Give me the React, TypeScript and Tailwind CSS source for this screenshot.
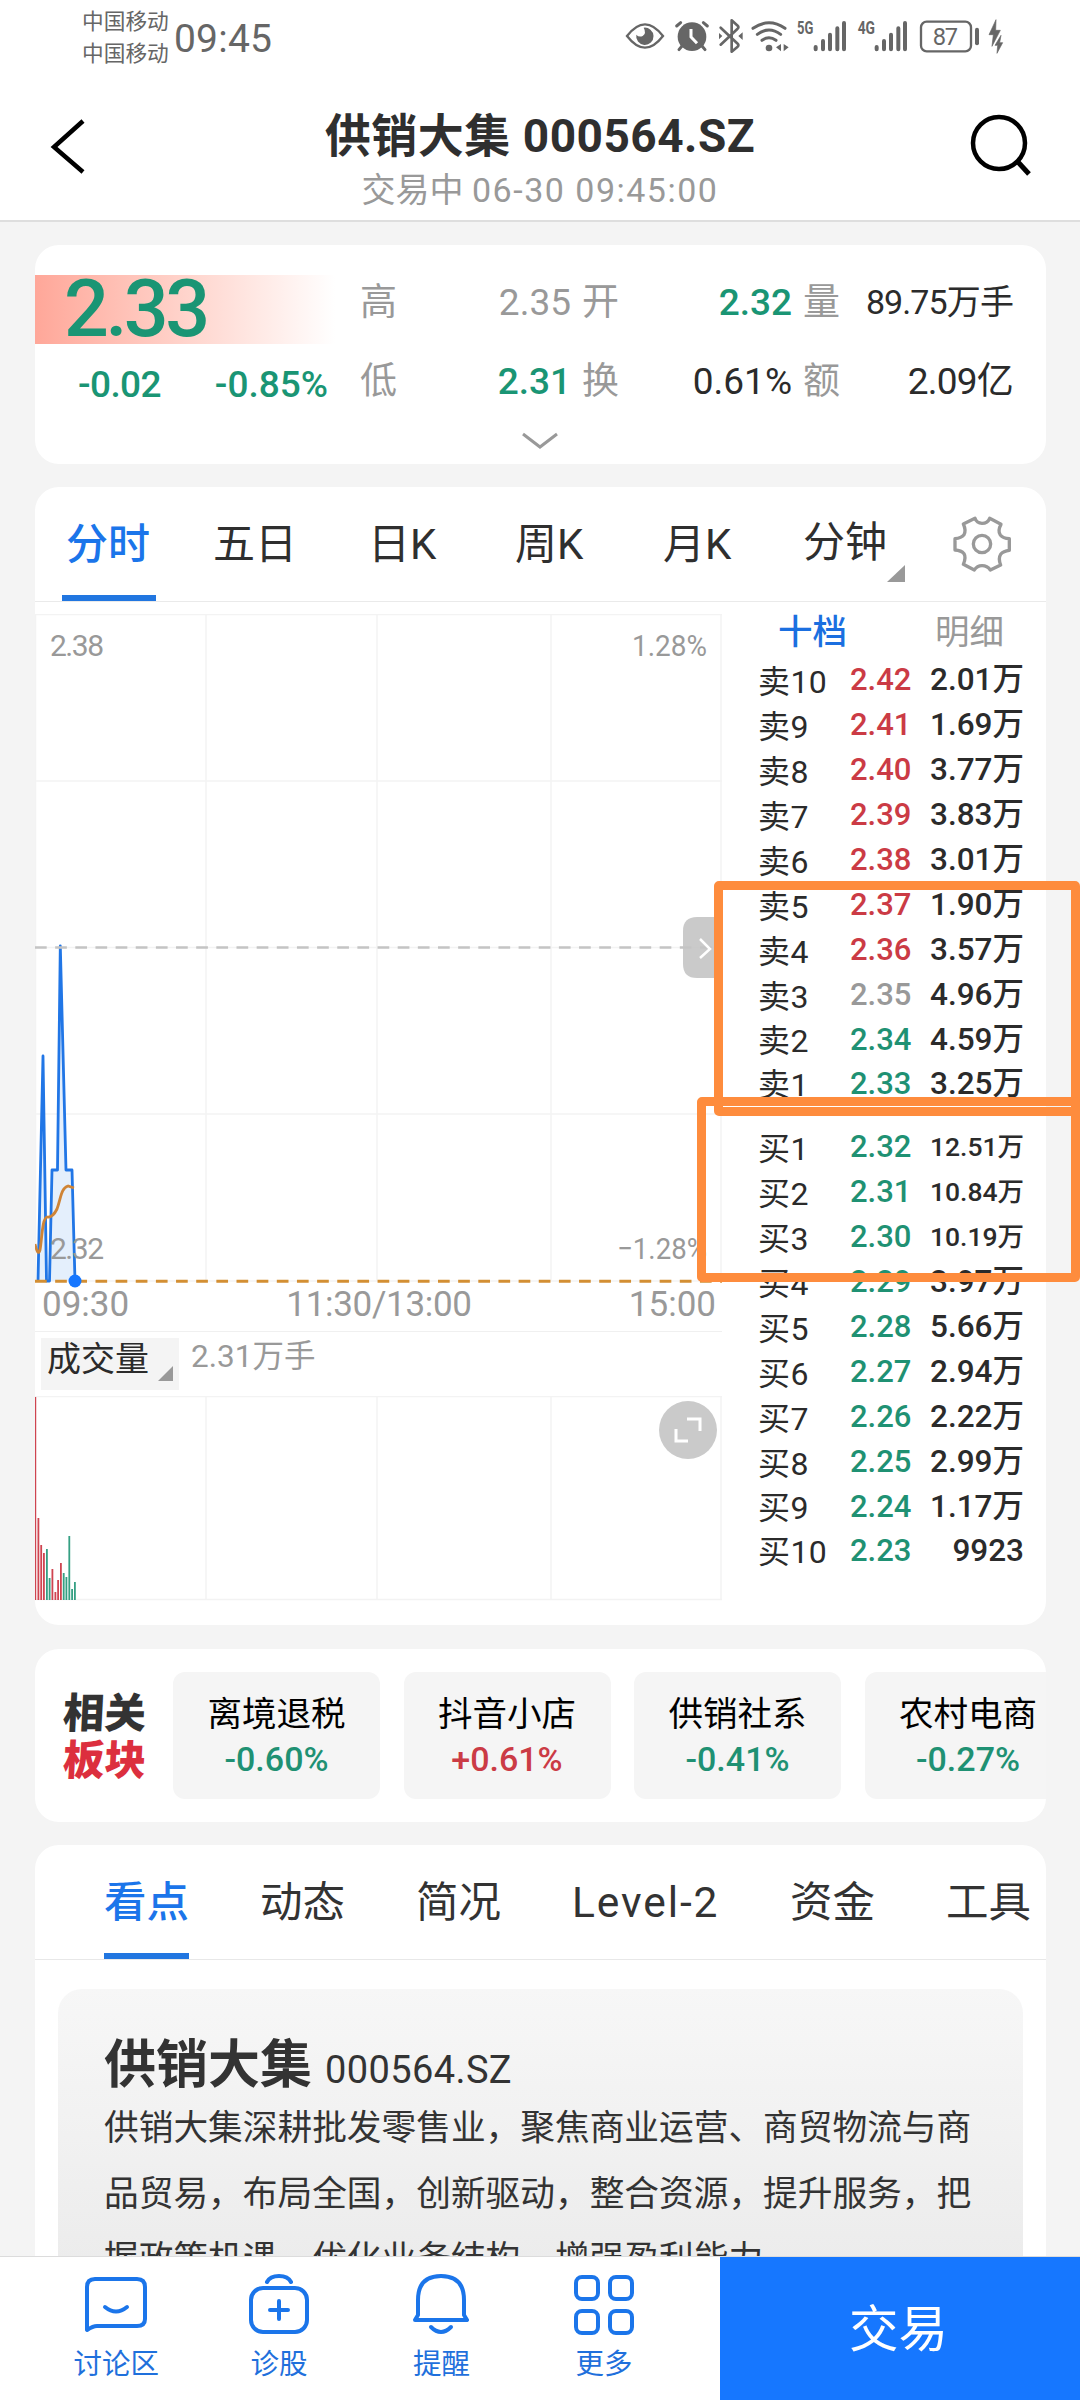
import clsx from 'clsx';

const quotes = [
  { label: '高', value: '2.35', tone: 'text-[#999]' },
  { label: '开', value: '2.32', tone: 'text-[#1a9574] font-medium' },
  { label: '量', value: '89.75万手', tone: 'text-[#2b2b2b] text-[34px] tracking-[-0.9px]' },
  { label: '低', value: '2.31', tone: 'text-[#1a9574] font-medium' },
  { label: '换', value: '0.61%', tone: 'text-[#2b2b2b]' },
  { label: '额', value: '2.09亿', tone: 'text-[#2b2b2b] tracking-[-0.8px]' },
];

const periods = ['五日', '日K', '周K', '月K'];

const asks = [
  ['卖10', '2.42', '2.01万'],
  ['卖9', '2.41', '1.69万'],
  ['卖8', '2.40', '3.77万'],
  ['卖7', '2.39', '3.83万'],
  ['卖6', '2.38', '3.01万'],
  ['卖5', '2.37', '1.90万'],
  ['卖4', '2.36', '3.57万'],
  ['卖3', '2.35', '4.96万'],
  ['卖2', '2.34', '4.59万'],
  ['卖1', '2.33', '3.25万'],
];

const bids = [
  ['买1', '2.32', '12.51万'],
  ['买2', '2.31', '10.84万'],
  ['买3', '2.30', '10.19万'],
  ['买4', '2.29', '3.97万'],
  ['买5', '2.28', '5.66万'],
  ['买6', '2.27', '2.94万'],
  ['买7', '2.26', '2.22万'],
  ['买8', '2.25', '2.99万'],
  ['买9', '2.24', '1.17万'],
  ['买10', '2.23', '9923'],
];

const sectors = [
  { name: '离境退税', change: '-0.60%' },
  { name: '抖音小店', change: '+0.61%' },
  { name: '供销社系', change: '-0.41%' },
  { name: '农村电商', change: '-0.27%' },
];

const RED = '#cf4450';
const GREEN = '#35a083';

// [x, height, colour]
const volumes: [number, number, string][] = [
  [-0.6, 203, RED],
  [2.5, 82, RED],
  [5.3, 55, RED],
  [8, 47, RED],
  [11, 51, GREEN],
  [13.7, 22, GREEN],
  [16.5, 31, RED],
  [19.5, 8, RED],
  [22.2, 20, RED],
  [25, 37, RED],
  [27.8, 27, GREEN],
  [30.5, 23, GREEN],
  [33.4, 64, GREEN],
  [36.2, 11, GREEN],
  [39, 18, GREEN],
];

const gridX = [0.5, 171, 342, 516, 686];

function StatusIcons() {
  return (
    <svg width="400" height="40" viewBox="60 45 1200 120" fill="none" stroke="#666" strokeWidth="7">
      <path d="M81 108 Q108 73 135 73 Q162 73 189 108 Q162 143 135 143 Q108 143 81 108Z" />
      <path d="M131 83 A26 26 0 1 1 109 104 Q117 113 128 108 Q140 99 131 83Z" fill="#666" stroke="none" />
      <circle cx="276" cy="110" r="43" fill="#666" stroke="none" />
      <path d="M230 78 L242 68 M322 78 L310 68 M246 138 L237 149 M306 138 L315 149" strokeWidth="9" strokeLinecap="round" />
      <path d="M273 87 V111 L291 130" stroke="#fff" strokeWidth="9" />
      <path d="M362 83 L413 131 Q418 136 412 141 L395 155 V61 L413 77 Q418 82 412 87 L362 134" strokeWidth="8" strokeLinejoin="round" strokeLinecap="round" />
      <path d="M357 99 L367 108 L357 118Z M428 97 L415 108 L428 120Z" fill="#666" stroke="none" />
      <path d="M459 85 Q507 52 555 85 M472 103 Q507 77 542 103 M486 121 Q507 106 528 121" strokeWidth="9" strokeLinecap="round" />
      <circle cx="507" cy="144" r="10" fill="#666" stroke="none" />
      <path d="M528 142 L543 132 V154Z M566 142 L551 132 V154Z" fill="#666" stroke="none" />
      <g strokeWidth="12" strokeLinecap="round">
        <path d="M647 141 V148 M669 123 V148 M690 104 V148 M712 85 V148 M732 69 V148" />
        <path d="M830 141 V148 M852 123 V148 M873 104 V148 M895 85 V148 M915 69 V148" />
      </g>
      <rect x="963" y="65" width="150" height="89" rx="17" />
      <path d="M1131 89 V130" strokeWidth="12" strokeLinecap="round" />
      <path d="M1188 59 L1167 104 H1180 L1176 139 L1201 91 H1187Z M1203 106 L1185 136 H1193 L1191 160 L1208 128 H1199Z" fill="#666" stroke="#666" strokeWidth="2" />
      <g fill="#666" stroke="none" className="font-['Roboto',sans-serif]">
        <text x="591" y="102" fontSize="54" fontWeight="700" textLength="49" lengthAdjust="spacingAndGlyphs">5G</text>
        <text x="773" y="102" fontSize="54" fontWeight="700" textLength="52" lengthAdjust="spacingAndGlyphs">4G</text>
        <text x="998" y="136" fontSize="71" textLength="76">87</text>
      </g>
    </svg>
  );
}

function Header() {
  return (
    <header className="h-[222px] shrink-0 bg-white border-b-2 border-[#dedede]">
      <div className="h-[72px] flex items-start pl-[82px] text-[#666]">
        <div className="pt-[6px] text-[21.7px] leading-[32px] w-[92px] whitespace-nowrap">
          <div>中国移动</div>
          <div>中国移动</div>
        </div>
        <div className="pt-[15px] text-[39px] leading-[48px] w-[446px] tracking-[0.2px]">09:45</div>
        <div className="pt-[15px]">
          <StatusIcons />
        </div>
      </div>
      <div className="flex justify-between pt-[37px]">
        <svg width="140" height="76" fill="none" stroke="#000" strokeWidth="4.5">
          <path d="M83 12 L54 38 L83 63" />
        </svg>
        <div className="text-center">
          <h1 className="text-[46px] leading-[54px] font-bold text-[#2f2f2f] tracking-[0.5px]">供销大集 000564.SZ</h1>
          <p className="text-[34px] leading-[54px] text-[#999]">
            交易中 <span className="tracking-[1.5px]">06-30 09:45:00</span>
          </p>
        </div>
        <svg width="140" height="76" fill="none" stroke="#000" strokeWidth="4.5">
          <circle cx="59" cy="34" r="26" />
          <path d="M78 53 L89 65" strokeWidth="5" />
        </svg>
      </div>
    </header>
  );
}

function QuoteCard() {
  return (
    <section className="h-[219px] shrink-0 bg-white rounded-3xl overflow-hidden pt-4">
      <div className="flex">
        <div className="w-[325px] pt-[14px] text-[#1a9574] font-medium">
          <div className="h-[69px] w-[300px] pl-[29px] flex items-center bg-linear-to-r from-[#ffa799] to-white text-[79px] leading-none tracking-[-3.5px]">
            2.33
          </div>
          <div className="h-[82px] flex items-center justify-between pl-[43px] pr-[32px] text-[37px]">
            <span className="tracking-[-0.6px]">-0.02</span>
            <span>-0.85%</span>
          </div>
        </div>
        <div className="grid grid-cols-[211px_210px_210px] gap-x-[11px] pt-[2px] h-[160px]">
          {quotes.map((q) => (
            <div key={q.label} className="h-[79px] flex items-center justify-between text-[37px]">
              <span className="text-[#999]">{q.label}</span>
              <span className={q.tone}>{q.value}</span>
            </div>
          ))}
        </div>
      </div>
      <div className="h-[44px] -mt-[7px] pr-[2px] flex items-center justify-center">
        <svg width="36" height="18" fill="none" stroke="#999" strokeWidth="3">
          <path d="M1 2 L18 15 L35 2" />
        </svg>
      </div>
    </section>
  );
}

function PeriodTabs() {
  return (
    <div className="h-[115px] flex text-[42px] leading-[116px] text-[#2f2f2f] border-b border-[#eaeaea]">
      <div className="w-[94px] ml-[27px] pr-[2px] text-center text-[#1b75ea] font-medium border-b-[6px] border-[#2176e0]">分时</div>
      <div className="flex flex-1 pl-[57px]">
        {periods.map((p) => (
          <div key={p} className="w-[147px] text-left even:pl-[8px] nth-[3]:pl-[8px] nth-[4]:pl-[9px]">
            {p}
          </div>
        ))}
        <div className="flex items-end pl-[2px]">
          <span>分钟</span>
          <svg width="18" height="17" className="mb-[19px]">
            <path d="M18 0 V17 H0Z" fill="#999" />
          </svg>
        </div>
      </div>
      <div className="w-[94px] flex items-center">
        <svg width="60" height="60" viewBox="36 41 180 180" fill="none" stroke="#999" strokeWidth="10">
          <path
            d="M105 54 Q110 69 126 69 Q143 69 149 54 L183 72 Q172 92 181 104 Q189 114 208 115 V150 Q190 152 182 162 Q174 174 182 194 L151 209 Q142 196 126 196 Q111 196 103 209 L70 192 Q79 172 72 160 Q64 150 45 149 V115 Q64 113 72 103 Q79 90 70 71Z"
            strokeLinejoin="round"
          />
          <circle cx="126" cy="131" r="26" />
        </svg>
      </div>
    </div>
  );
}

function PriceChart() {
  return (
    <svg width="687" height="676" className="block">
      <g stroke="#f3f3f3" strokeWidth="1.5">
        {gridX.map((x) => (
          <path key={x} d={`M${x} 0V667`} />
        ))}
        <path d="M0 .5H687M0 167H687M0 333.5H687M0 500H687M0 667H687" />
      </g>
      <path d="M3 667 L8 442 L12.5 667 L14.5 667 L17 556 H22.5 L25.5 332 L31 556 H37 L40 667Z" fill="#e4effc" />
      <path
        d="M3 667 L8 442 L11.5 667 H14.5 L17 556 H22.5 L25.3 332 L31 556 H37 L40 667"
        fill="none"
        stroke="#2176e6"
        strokeWidth="2.8"
        strokeLinejoin="round"
      />
      <path d="M0 630 Q3 643 5 636 C7 626 7 604 12 603 C17 604 20 599 22 595 C26 584 26 574 33 572 L39 574" fill="none" stroke="#cf8436" strokeWidth="2.8" />
      <path d="M0 333.5H687" stroke="#c4c4c4" strokeWidth="2.5" strokeDasharray="11.7 8.45" />
      <path d="M0 667.3H687" stroke="#d38f33" strokeWidth="3" strokeDasharray="11.7 8.45" />
      <circle cx="40" cy="667" r="6.5" fill="#1677ff" />
      <g fill="#999" fontSize="30" className="font-['Roboto',sans-serif]">
        <text x="15" y="42" textLength="54">2.38</text>
        <text x="597" y="42" textLength="75" lengthAdjust="spacingAndGlyphs">1.28%</text>
        <text x="15" y="645" textLength="54">2.32</text>
        <text x="582" y="645" textLength="90" lengthAdjust="spacingAndGlyphs">−1.28%</text>
      </g>
      <path d="M687 303H662Q648 303 648 317V350Q648 364 662 364H687Z" fill="#c4c4c4" fillOpacity=".9" />
      <path d="M665 325L675 335L665 344" fill="none" stroke="#fff" strokeWidth="2.5" />
    </svg>
  );
}

function VolumeChart() {
  return (
    <svg width="687" height="205" className="block">
      <g stroke="#f3f3f3" strokeWidth="1.5">
        {gridX.map((x) => (
          <path key={x} d={`M${x} 0V204`} />
        ))}
        <path d="M0 .5H687M0 203.5H687" />
      </g>
      {volumes.map(([x, h, color]) => (
        <rect key={x} x={x} y={204 - h} width="1.8" height={h} fill={color} />
      ))}
      <circle cx="653" cy="34" r="29" fill="#cacaca" />
      <path d="M652 23H665V35M641 33V45H653" fill="none" stroke="#fff" strokeWidth="3" />
    </svg>
  );
}

function OrderRow({ row }: { row: string[] }) {
  const [label, price, volume] = row;
  const p = Number(price);
  return (
    <div className="h-[45px] nth-[n+9]:h-[44px] flex items-center text-[31px] leading-[45px] whitespace-nowrap text-[#2b2b2b]">
      <span className="w-[91px] pt-[5px] -ml-[2px] mr-px text-[32px] tracking-[0.4px]">{label}</span>
      <span
        className={clsx(
          'font-medium',
          p > 2.35 && 'text-[#cb3b45]',
          p === 2.35 && 'text-[#999]',
          p < 2.35 && 'text-[#1f9173]',
        )}
      >
        {price}
      </span>
      <span className={clsx('ml-auto font-medium', volume.length > 5 ? 'text-[26.5px]' : 'text-[31.5px]')}>{volume}</span>
    </div>
  );
}

function OrderBook() {
  return (
    <div className="flex-1 pl-[38px] pr-[22px] pt-[4px]">
      <div className="flex text-[34.5px] leading-[52px] pl-[18px]">
        <span className="w-[157px] text-[#1b6fe0] font-medium">十档</span>
        <span className="text-[#999]">明细</span>
      </div>
      <div className="-mt-px">
        {asks.map((r) => (
          <OrderRow key={r[0]} row={r} />
        ))}
      </div>
      <div className="mt-[19px]">
        {bids.map((r) => (
          <OrderRow key={r[0]} row={r} />
        ))}
      </div>
    </div>
  );
}

function ChartCard() {
  return (
    <section className="h-[1138px] shrink-0 bg-white rounded-3xl overflow-hidden">
      <PeriodTabs />
      <div className="flex">
        <div className="w-[687px] pt-[12px]">
          <PriceChart />
          <div className="h-[42px] pl-[7px] pr-[6px] flex justify-between text-[35px] leading-[30px] text-[#999] border-b border-[#f0f0f0]">
            <span>09:30</span>
            <span className="tracking-[-0.3px]">11:30/13:00</span>
            <span>15:00</span>
          </div>
          <div className="h-[64px] flex pl-[6px] pt-[6px] text-[#999]">
            <div className="w-[138px] h-[52px] pl-[6px] flex bg-[#f4f4f4] text-[34px] leading-[42px] text-[#2b2b2b]">
              成交量
              <svg width="16" height="16" className="mt-[28px] ml-[9px]">
                <path d="M15 0 V15 H0Z" fill="#999" />
              </svg>
            </div>
            <span className="ml-[12px] text-[31.5px] leading-[38px]">2.31万手</span>
          </div>
          <VolumeChart />
        </div>
        <OrderBook />
      </div>
    </section>
  );
}

function SectorCard() {
  return (
    <section className="h-[173px] mt-px shrink-0 bg-white rounded-3xl overflow-hidden flex items-center">
      <div className="w-[138px] shrink-0 pl-[28px] pt-[2px] text-[41.5px] leading-[47px] font-black">
        <div className="text-[#333] -skew-x-3 w-[84px]">相关</div>
        <div className="text-[#dc2f3e] -skew-x-3 w-[84px]">板块</div>
      </div>
      <div className="flex gap-[23.5px]">
        {sectors.map((s) => (
          <div key={s.name} className="w-[207px] h-[127px] shrink-0 pt-[20px] rounded-xl bg-[#f5f5f5] text-center text-[34.5px] leading-[45px]">
            <div className="text-black">{s.name}</div>
            <div className={clsx('font-medium text-[34px]', s.change.startsWith('+') ? 'text-[#cb3b45]' : 'text-[#1f9173]')}>{s.change}</div>
          </div>
        ))}
      </div>
    </section>
  );
}

function InfoCard() {
  return (
    <section className="shrink-0 bg-white rounded-t-3xl overflow-hidden">
      <nav className="h-[115px] flex gap-[71px] pl-[69px] whitespace-nowrap text-[42.5px] leading-[116px] text-[#333] border-b border-[#e8e8e8]">
        <span className="text-[#1b75ea] font-medium border-b-[6px] border-[#2176e0]">看点</span>
        <span>动态</span>
        <span>简况</span>
        <span className="w-[147px] tracking-[1.9px]">Level-2</span>
        <span>资金</span>
        <span>工具</span>
      </nav>
      <div className="mt-[29px] mx-[23px] h-[420px] rounded-t-3xl px-[46px] pt-[39px] bg-linear-to-b from-[#f7f7f7] to-[#e6e6e6] text-[#333]">
        <h2 className="text-[52px] leading-[76px] font-bold">
          供销大集 <span className="text-[38px] font-normal tracking-[0.4px]">000564.SZ</span>
        </h2>
        <p className="-mt-[12px] w-[880px] text-[34.7px] leading-[65.5px]">
          供销大集深耕批发零售业，聚焦商业运营、商贸物流与商
          <br />
          品贸易，布局全国，创新驱动，整合资源，提升服务，把
          <br />
          握政策机遇，优化业务结构，增强盈利能力
        </p>
      </div>
    </section>
  );
}

const actions = [
  {
    label: '讨论区',
    icon: (
      <>
        <path d="M3 57 V14 Q3 6 11 6 H53 Q61 6 61 14 V46 Q61 53 53 53 H13 Q9 53 3 57Z" />
        <path d="M21 34 Q32 43 43 34" />
      </>
    ),
  },
  {
    label: '诊股',
    icon: (
      <>
        <rect x="4" y="15" width="56" height="44" rx="12" />
        <path d="M20 9 Q23 3 32 3 Q41 3 44 9 M32 28 V46 M23 37 H41" />
      </>
    ),
  },
  {
    label: '提醒',
    icon: (
      <>
        <path d="M9 42 V27 Q9 3 32 3 Q55 3 55 27 V42 L58 47 H6Z" />
        <path d="M22 54 Q32 64 42 54" />
      </>
    ),
  },
  {
    label: '更多',
    icon: (
      <>
        <rect x="4" y="4" width="22" height="22" rx="6" />
        <rect x="38" y="4" width="22" height="22" rx="6" />
        <rect x="4" y="38" width="22" height="22" rx="6" />
        <rect x="38" y="38" width="22" height="22" rx="6" />
      </>
    ),
  },
];

function BottomBar() {
  return (
    <footer className="h-[144px] shrink-0 flex bg-white border-t border-[#dcdcdc]">
      <div className="flex w-[720px] pl-[35px]">
        {actions.map((a) => (
          <div key={a.label} className="w-[162.6px] pt-[16px] flex flex-col items-center text-[28.5px] leading-[50px] text-[#1f70dc]">
            <svg width="64" height="64" fill="none" stroke="#1b75ea" strokeWidth="4" strokeLinejoin="round" strokeLinecap="round">
              {a.icon}
            </svg>
            <span className="mt-[3px]">{a.label}</span>
          </div>
        ))}
      </div>
      <button className="w-[360px] pr-[3px] pt-[3px] bg-[#1677ff] text-white text-[49.5px]">交易</button>
    </footer>
  );
}

export default function App() {
  return (
    <div className="relative w-[1080px] h-[2400px] overflow-hidden flex flex-col bg-[#f4f4f4] font-['Roboto','Noto_Sans_CJK_SC',sans-serif]">
      <Header />
      <main className="flex-1 min-h-0 overflow-hidden flex flex-col gap-[23px] pt-[23px] pl-[35px] pr-[34px]">
        <QuoteCard />
        <ChartCard />
        <SectorCard />
        <InfoCard />
      </main>
      <BottomBar />

      {/* highlight frames drawn over the order book */}
      <div className="absolute left-[714px] top-[881px] w-[366px] h-[235px] border-[9px] border-[#fe8c3d] rounded-[5px]" />
      <div className="absolute left-[697px] top-[1097px] w-[383px] h-[185px] border-[9px] border-[#fe8c3d] rounded-[5px]" />
    </div>
  );
}
